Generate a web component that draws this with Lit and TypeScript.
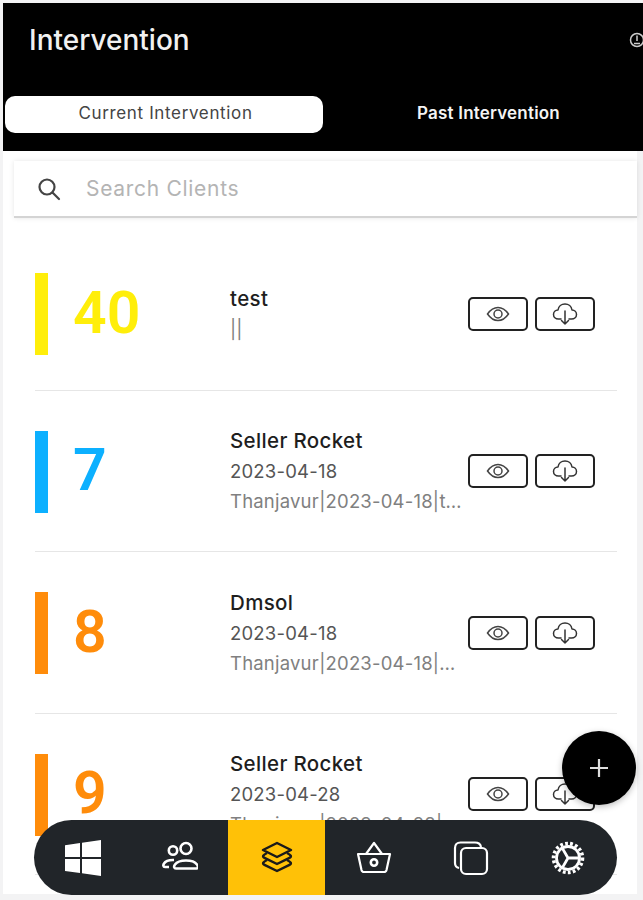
import { LitElement, html, css, svg } from 'lit';
import { customElement, state } from 'lit/decorators.js';

interface Intervention {
  count: number;
  color: string;
  name: string;
  date?: string;
  detail: string;
}

const eyeIcon = html`<svg width="24" height="18" viewBox="0 0 24 18" fill="none" stroke="#444" stroke-width="1.5">
  <path d="M1.5 9C5 4 8.5 2.5 12 2.5S19 4 22.5 9C19 14 15.5 15.5 12 15.5S5 14 1.5 9Z" />
  <circle cx="12" cy="9" r="4" />
</svg>`;

const cloudIcon = html`<svg width="26" height="24" viewBox="0 0 26 24" fill="none" stroke="#333" stroke-width="1.5" stroke-linecap="round" stroke-linejoin="round">
  <path d="M9 17H6.5C3.5 17 1.5 15 1.5 12.5S3.5 8 6 8C6.5 4.5 9.5 2 13 2S19.500 4.500 20 8C22.500 8 24.500 10 24.500 12.500S22.500 17 19.500 17H17" />
  <path d="M13 9V22M9.500 18.500L13 22L16.500 18.500" />
</svg>`;

const navIcons = [
  svg`<path fill="#fff" d="M0 5.200L15 3.100V17H0ZM17 2.800L36 0V17H17ZM0 19H15V33L0 30.900ZM17 19H36V36L17 33.300Z" />`,
  svg`<g fill="none" stroke="#fff" stroke-width="2.600">
    <circle cx="11" cy="10.500" r="4.200" /><circle cx="24" cy="8.500" r="5.500" />
    <path d="M7 27H3C1 27 1 25 2 23.500C3.500 21 7 19.800 12 20" />
    <path d="M14 28.500C12 28.500 11.500 26.500 13 24.500C15 21.800 19 20.500 24 20.500S33 21.800 35 24.500C36.500 26.500 36 28.500 34 28.500Z" />
  </g>`,
  svg`<g fill="none" stroke="#1a1a1a" stroke-width="2.500" stroke-linejoin="round">
    <path d="M18 3L32 10L18 17L4 10Z" />
    <path d="M8 13C4 15 3 16.500 5.500 17.800L18 24L30.500 17.800C33 16.500 32 15 28 13" />
    <path d="M8 20C4 22 3 23.500 5.500 24.800L18 31L30.500 24.800C33 23.500 32 22 28 20" />
  </g>`,
  svg`<g fill="none" stroke="#fff" stroke-width="2.200" stroke-linejoin="round">
    <path d="M2 14H34L30.500 30C30.200 31.200 29.500 32 28 32H8C6.500 32 5.800 31.200 5.500 30Z" />
    <path d="M10 14L18 3L26 14" />
    <circle cx="18" cy="22.500" r="3.200" stroke-width="2.600" />
  </g>`,
  svg`<g fill="none" stroke="#fff" stroke-width="2.200">
    <path d="M6 28C3.500 27.500 2 26 2 23V8C2 4.500 4 2.500 7.500 2.500H22C25.500 2.500 27.500 4 28 7" />
    <rect x="8" y="8" width="26" height="26" rx="5" />
  </g>`,
  svg`<g fill="none" stroke="#fff">
    <circle cx="18" cy="18" r="11.500" stroke-width="2.800" />
    <circle cx="18" cy="18" r="14.500" stroke-width="3.600" stroke-dasharray="2.800 2.200" />
    <path stroke-width="2.800" d="M18 18H30M18 18L12 7.600M18 18L12 28.400" />
  </g>`,
];

@customElement('app-root')
export class AppRoot extends LitElement {
  static styles = css`
    :host {
      display: block;
      height: 900px;
      font-family: Inter, "Noto Sans", sans-serif;
      color: #1c1c1c;
    }

    .frame {
      position: relative;
      box-sizing: border-box;
      height: 900px;
      padding: 3px 0 0 3px;
      overflow: hidden;
      background: #f3f3f4;
    }

    .header {
      height: 148px;
      box-sizing: border-box;
      padding-top: 17px;
      background: #000;
      overflow: hidden;
    }

    .title-row {
      display: flex;
      align-items: center;
      justify-content: space-between;
      height: 40px;
      padding-left: 26px;
      margin-right: -2px;
    }

    .title {
      font-size: 28px;
      font-weight: 500;
      color: #f1f1f1;
    }

    .tabs {
      display: grid;
      grid-template-columns: 318px 1fr;
      margin: 36px 0 0 2px;
      height: 37px;
    }

    .tab {
      display: flex;
      align-items: center;
      justify-content: center;
      box-sizing: border-box;
      height: 37px;
      border-radius: 10px;
      color: #f4f4f4;
      font-weight: 600;
      font-size: 17px;
      letter-spacing: 0.2px;
      padding: 0 12px 3px 23px;
    }

    .tab.active {
      padding: 0 0 3px 3px;
      background: #fff;
      color: #444;
      font-weight: 400;
      font-size: 17px;
      letter-spacing: 0.65px;
    }

    .content {
      width: 634px;
      height: 743px;
      box-sizing: border-box;
      padding-top: 10px;
      background: #fff;
    }

    .search {
      display: flex;
      align-items: center;
      gap: 25px;
      height: 57px;
      margin-left: 11px;
      padding-left: 23px;
      border-bottom: 2px solid #d4d4d4;
      box-shadow: 0 0 5px rgba(0, 0, 0, 0.1);
      box-sizing: border-box;
      font-size: 21px;
      letter-spacing: 0.7px;
      color: #b4b4b4;
    }

    .rows {
      margin: 20px 20px 0 32px;
    }

    .row {
      display: grid;
      grid-template-columns: 13px 182px 238px auto;
      align-items: center;
      height: 161.400px;
      box-sizing: border-box;
      border-bottom: 1.500px solid #e6e6e6;
    }

    .row:first-child {
      height: 153px;
    }

    .bar {
      height: 82px;
      margin-top: 1.500px;
    }

    .row:first-child .bar {
      margin-top: 0;
    }

    .count {
      padding: 0 0 3px 25px;
      font-family: Roboto, sans-serif;
      font-size: 59px;
      font-weight: 600;
    }

    .info {
      padding-right: 5px;
      min-width: 0;
      line-height: 30px;
    }

    .name {
      font-size: 20.500px;
      font-weight: 500;
      letter-spacing: 0.35px;
      color: #1e1e1e;
    }

    .date {
      font-size: 18.500px;
      letter-spacing: 0.2px;
      color: #555;
    }

    .detail {
      font-size: 18.500px;
      letter-spacing: 0.2px;
      color: #808080;
      white-space: nowrap;
      overflow: hidden;
      text-overflow: ellipsis;
    }

    .actions {
      display: flex;
      gap: 7px;
    }

    .action {
      display: flex;
      align-items: center;
      justify-content: center;
      width: 60px;
      height: 34px;
      box-sizing: border-box;
      border: 2px solid #222;
      border-radius: 5px;
      background: #fff;
    }

    .nav {
      position: absolute;
      left: 34px;
      top: 820px;
      width: 583px;
      height: 75px;
      display: grid;
      grid-template-columns: repeat(6, 1fr);
      border-radius: 38px;
      background: #212529;
      overflow: hidden;
    }

    .nav-item {
      display: flex;
      align-items: center;
      justify-content: center;
    }

    .nav-item.active {
      background: #ffc107;
    }

    .fab {
      position: absolute;
      left: 562px;
      top: 731px;
      width: 74px;
      height: 74px;
      display: flex;
      align-items: center;
      justify-content: center;
      border-radius: 50%;
      background: #000;
      box-shadow: 0 2px 6px rgba(0, 0, 0, 0.25);
    }
  `;

  @state()
  private rows: Intervention[] = [
    { count: 40, color: '#ffee0a', name: 'test', detail: '||' },
    { count: 7, color: '#0cb0ff', name: 'Seller Rocket', date: '2023-04-18', detail: 'Thanjavur|2023-04-18|test intervention' },
    { count: 8, color: '#ff8c0a', name: 'Dmsol', date: '2023-04-18', detail: 'Thanjavur|2023-04-18|Dmsol intervention' },
    { count: 9, color: '#ff8c0a', name: 'Seller Rocket', date: '2023-04-28', detail: 'Thanjavur|2023-04-28|test intervention' },
  ];

  private renderRow(row: Intervention) {
    return html`
      <div class="row">
        <div class="bar" style="background: ${row.color}"></div>
        <div class="count" style="color: ${row.color}">${row.count}</div>
        <div class="info">
          <div class="name">${row.name}</div>
          ${row.date ? html`<div class="date">${row.date}</div>` : ''}
          <div class="detail">${row.detail}</div>
        </div>
        <div class="actions">
          <div class="action">${eyeIcon}</div>
          <div class="action">${cloudIcon}</div>
        </div>
      </div>
    `;
  }

  render() {
    return html`
      <div class="frame">
        <div class="header">
          <div class="title-row">
            <div class="title">Intervention</div>
            <svg width="16" height="16" viewBox="0 0 16 16" fill="none" stroke="#ccc" stroke-width="1.500">
              <circle cx="8" cy="8" r="6.500" />
              <path d="M8 3.500V9M5 11.500H11" />
            </svg>
          </div>
          <div class="tabs">
            <div class="tab active">Current Intervention</div>
            <div class="tab">Past Intervention</div>
          </div>
        </div>
        <div class="content">
          <div class="search">
            <svg width="24" height="24" viewBox="0 0 24 24" fill="none" stroke="#444" stroke-width="2.200" stroke-linecap="round">
              <circle cx="10" cy="10" r="7.500" />
              <path d="M15.500 15.500L22 22" />
            </svg>
            <span>Search Clients</span>
          </div>
          <div class="rows">${this.rows.map((row) => this.renderRow(row))}</div>
        </div>
        <div class="nav">
          ${navIcons.map(
            (icon, i) => html`
              <div class="nav-item ${i === 2 ? 'active' : ''}">
                <svg width="36" height="36" viewBox="0 0 36 36">${icon}</svg>
              </div>
            `,
          )}
        </div>
        <div class="fab">
          <svg width="20" height="20" viewBox="0 0 20 20" stroke="#ddd" stroke-width="2.200">
            <path d="M10 1V19M1 10H19" />
          </svg>
        </div>
      </div>
    `;
  }
}

declare global {
  interface HTMLElementTagNameMap {
    'app-root': AppRoot;
  }
}
